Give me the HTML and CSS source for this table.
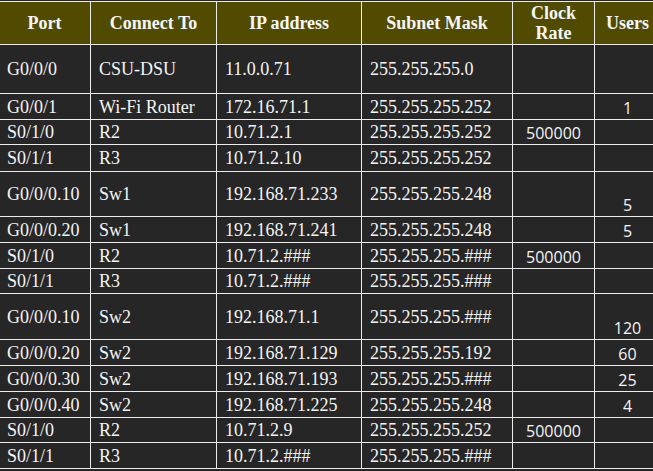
FILE: index.html
```html
<!DOCTYPE html>
<html lang="en">
<head>
<meta charset="utf-8">
<title>Addressing Table</title>
<link rel="stylesheet" href="styles.css">
</head>
<body>
<table class="addr">
  <colgroup>
    <col class="c-port">
    <col class="c-conn">
    <col class="c-ip">
    <col class="c-mask">
    <col class="c-clock">
    <col class="c-users">
  </colgroup>
  <thead>
    <tr class="r43">
      <th>Port</th>
      <th>Connect To</th>
      <th>IP address</th>
      <th>Subnet Mask</th>
      <th>Clock Rate</th>
      <th>Users</th>
    </tr>
  </thead>
  <tbody>
    <tr class="r49"><td>G0/0/0</td><td>CSU-DSU</td><td>11.0.0.71</td><td>255.255.255.0</td><td class="num"></td><td class="num"></td></tr>
    <tr class="r26"><td>G0/0/1</td><td>Wi-Fi Router</td><td>172.16.71.1</td><td>255.255.255.252</td><td class="num"></td><td class="num">1</td></tr>
    <tr class="r25"><td>S0/1/0</td><td>R2</td><td>10.71.2.1</td><td>255.255.255.252</td><td class="num">500000</td><td class="num"></td></tr>
    <tr class="r27"><td>S0/1/1</td><td>R3</td><td>10.71.2.10</td><td>255.255.255.252</td><td class="num"></td><td class="num"></td></tr>
    <tr class="r45"><td>G0/0/0.10</td><td>Sw1</td><td>192.168.71.233</td><td>255.255.255.248</td><td class="num"></td><td class="num">5</td></tr>
    <tr class="r26"><td>G0/0/0.20</td><td>Sw1</td><td>192.168.71.241</td><td>255.255.255.248</td><td class="num"></td><td class="num">5</td></tr>
    <tr class="r26"><td>S0/1/0</td><td>R2</td><td>10.71.2.###</td><td>255.255.255.###</td><td class="num">500000</td><td class="num"></td></tr>
    <tr class="r25"><td>S0/1/1</td><td>R3</td><td>10.71.2.###</td><td>255.255.255.###</td><td class="num"></td><td class="num"></td></tr>
    <tr class="r46"><td>G0/0/0.10</td><td>Sw2</td><td>192.168.71.1</td><td>255.255.255.###</td><td class="num"></td><td class="num">120</td></tr>
    <tr class="r26"><td>G0/0/0.20</td><td>Sw2</td><td>192.168.71.129</td><td>255.255.255.192</td><td class="num"></td><td class="num">60</td></tr>
    <tr class="r26"><td>G0/0/0.30</td><td>Sw2</td><td>192.168.71.193</td><td>255.255.255.###</td><td class="num"></td><td class="num">25</td></tr>
    <tr class="r26"><td>G0/0/0.40</td><td>Sw2</td><td>192.168.71.225</td><td>255.255.255.248</td><td class="num"></td><td class="num">4</td></tr>
    <tr class="r25"><td>S0/1/0</td><td>R2</td><td>10.71.2.9</td><td>255.255.255.252</td><td class="num">500000</td><td class="num"></td></tr>
    <tr class="r26"><td>S0/1/1</td><td>R3</td><td>10.71.2.###</td><td>255.255.255.###</td><td class="num"></td><td class="num"></td></tr>
  </tbody>
</table>
</body>
</html>
```
FILE: styles.css
```css
html, body {
  margin: 0;
  padding: 0;
  overflow: hidden;
  background: #262626;
}

body {
  padding-top: 1px;
}

.addr {
  border-collapse: collapse;
  table-layout: fixed;
  width: 662px;
  margin-left: -2px;
  font-family: "Liberation Serif", "Times New Roman", serif;
  font-size: 18px;
  line-height: 20px;
  color: #f4f4f4;
}

.c-port { width: 92px; }
.c-conn { width: 126px; }
.c-ip { width: 145px; }
.c-mask { width: 151px; }
.c-clock { width: 82px; }
.c-users { width: 66px; }

.addr th,
.addr td {
  border: 1px solid #ececec;
  padding: 0 8px;
  vertical-align: middle;
  white-space: nowrap;
  overflow: hidden;
}

.addr th {
  background: #514b00;
  font-weight: bold;
  text-align: center;
  white-space: normal;
  color: #f6f6f6;
}

.addr td {
  background: #262626;
  text-align: left;
}

.addr td.num {
  font-family: "Open Sans", "Noto Sans", sans-serif;
  font-size: 16px;
  text-align: center;
  vertical-align: bottom;
  padding-bottom: 1px;
}

.r43 { height: 43px; }
.r49 { height: 49px; }
.r46 { height: 46px; }
.r45 { height: 45px; }
.r27 { height: 27px; }
.r26 { height: 26px; }
.r25 { height: 25px; }
```
